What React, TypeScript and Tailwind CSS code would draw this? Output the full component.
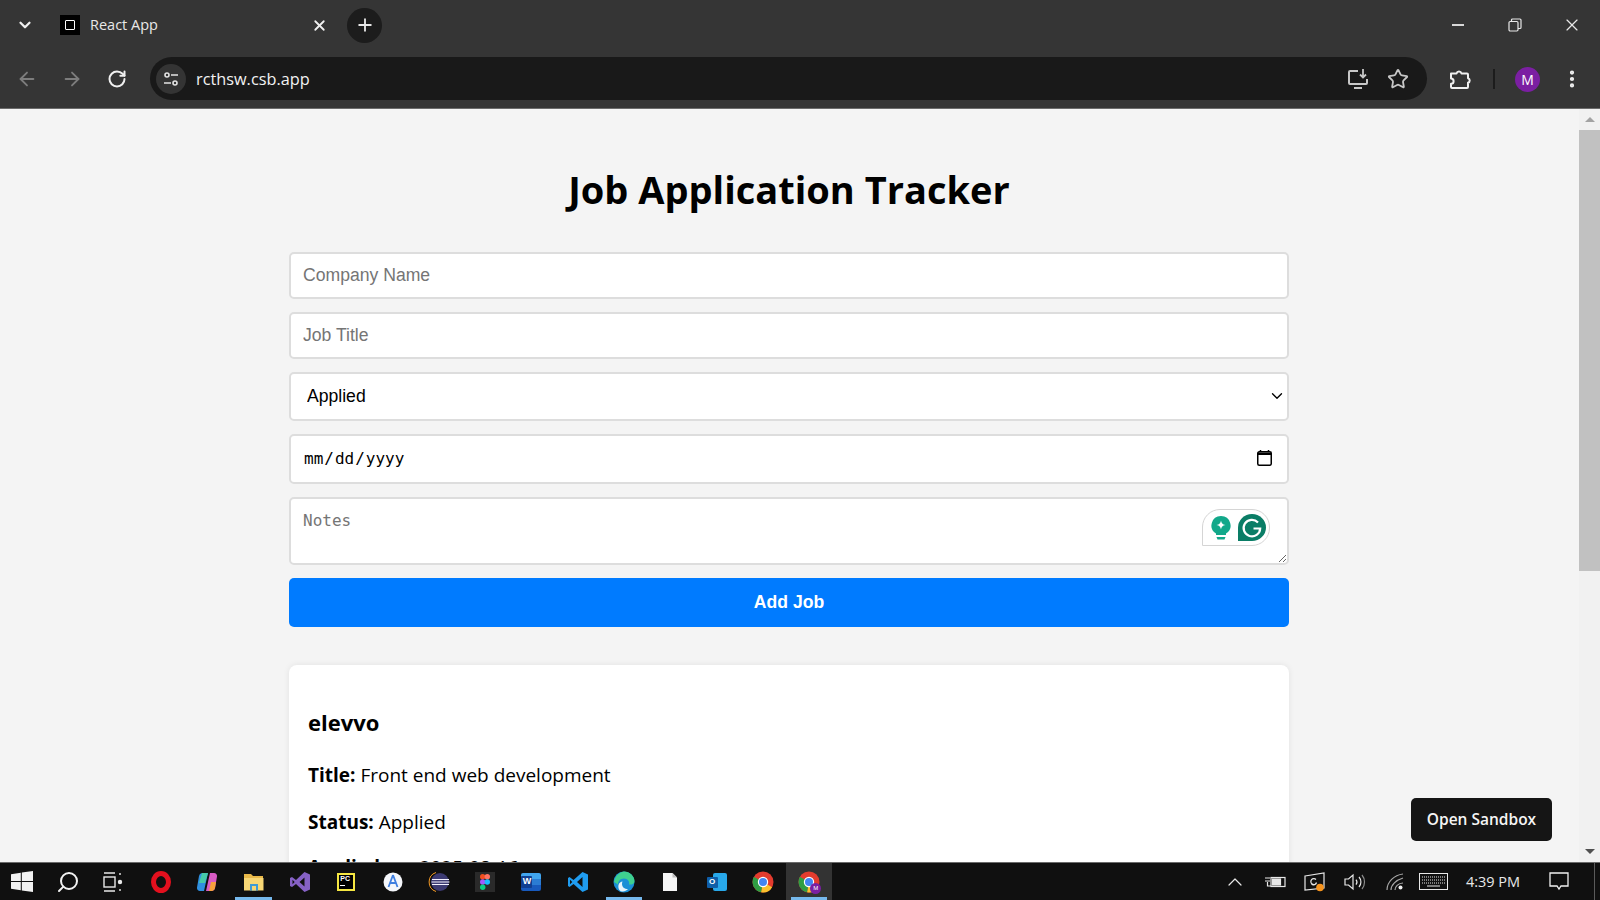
import { ArrowLeft, ArrowRight, ChevronDown, ChevronUp, EllipsisVertical, Plus, RotateCw, Search, Star, X } from "lucide-react";

// window controls and toolbar glyphs that lucide draws too differently
function RestoreIcon() {
  return (
    <svg width="14" height="14" viewBox="0 0 14 14" fill="none" stroke="#e8e8e8" strokeWidth="1.2">
      <rect x="1" y="3.5" width="9" height="9.5" rx="1.2" />
      <path d="M3.5 3.5V2a1 1 0 0 1 1-1H12a1 1 0 0 1 1 1v7.5a1 1 0 0 1-1 1h-2" />
    </svg>
  );
}

function SiteSettingsIcon() {
  return (
    <svg width="18" height="18" viewBox="0 0 18 18" fill="none" stroke="#e3e3e3" strokeWidth="1.6">
      <circle cx="5" cy="5" r="2" />
      <path d="M9 5h7M2 13h7" />
      <circle cx="13" cy="13" r="2" />
    </svg>
  );
}

function CastIcon() {
  return (
    <svg width="22" height="22" viewBox="0 0 22 22" fill="none" stroke="#c7c7c7" strokeWidth="2">
      <path d="M11 3H3a1 1 0 0 0-1 1v11a1 1 0 0 0 1 1h16a1 1 0 0 0 1-1v-4" />
      <path d="M7 20h8" />
      <path d="M16 1v8M13 6.5l3 3 3-3" strokeWidth="1.8" />
    </svg>
  );
}

function PuzzleIcon() {
  return (
    <svg width="22" height="22" viewBox="0 0 22 22" fill="none" stroke="#f0f0f0" strokeWidth="2" strokeLinejoin="round">
      <path d="M2 5.5h5.5a2.6 2.6 0 0 1 5 0H18a1 1 0 0 1 1 1v3.7a2.4 2.4 0 0 1 0 4.6V19a1 1 0 0 1-1 1H3a1 1 0 0 1-1-1v-3.2a2.6 2.6 0 0 0 0-5.2z" />
    </svg>
  );
}

function CalendarIcon() {
  return (
    <svg width="15" height="16" viewBox="0 0 15 16" fill="none">
      <path d="M3.500 0v2M11.500 0v2" stroke="#000" strokeWidth="1.500" />
      <rect x="0.750" y="1.750" width="13.500" height="13.500" rx="1.500" stroke="#000" strokeWidth="1.500" />
      <path d="M1 2.500h13v2.500H1z" fill="#000" />
    </svg>
  );
}

function GrammarlyBadge() {
  return (
    <div className="absolute right-[19px] top-[12px] flex h-[37px] w-[68px] items-center gap-[7px] rounded-[18px] rounded-bl-none border border-[#d5d5d5] bg-white pl-[8px]">
      <svg width="20" height="24" viewBox="0 0 20 24">
        <path d="M10 0a9.500 9.500 0 0 0-5 17.600V19h10v-1.400A9.500 9.500 0 0 0 10 0z" fill="#12a88a" />
        <path d="M5.500 21h9l-1 2.500h-7z" fill="#12a88a" />
        <path d="M10 4.500c.6 3 1.400 3.800 4.500 4.500-3.100.7-3.900 1.500-4.500 4.500-.6-3-1.400-3.800-4.500-4.500 3.100-.7 3.900-1.500 4.500-4.500z" fill="#fff" />
      </svg>
      <svg width="28" height="27" viewBox="0 0 28 27">
        <path d="M14 0a14 13.500 0 1 1 0 27H0V14A14 14 0 0 1 14 0z" fill="#0a7d66" />
        <path d="M20 8.500a8.300 8.300 0 1 0 2.200 6H15.500" fill="none" stroke="#fff" strokeWidth="2.200" />
      </svg>
    </div>
  );
}

function TaskIcon({ active, open, children }: { active?: boolean; open?: boolean; children: React.ReactNode }) {
  return (
    <div className={`relative flex h-full w-[46.3px] shrink-0 items-center justify-center ${active ? "bg-[#333333]" : ""}`}>
      {children}
      {(open || active) && <div className="absolute bottom-0 left-[5px] right-[5px] h-[3px] bg-[#76b9ed]" />}
    </div>
  );
}

const chromeWheel = (
  <>
    <circle cx="11" cy="11" r="10.500" fill="#e33b2e" />
    <path d="M11 11 20.100 16.200A10.500 10.500 0 0 1 9 21.300z" fill="#fbc02d" />
    <path d="M11 11 9 21.300A10.500 10.500 0 0 1 1.900 5.800z" fill="#2f9e44" />
    <circle cx="11" cy="11" r="5.200" fill="#fff" />
    <circle cx="11" cy="11" r="4" fill="#4285f4" />
  </>
);

function Taskbar() {
  return (
    <footer className="relative z-10 flex h-[38px] shrink-0 items-stretch border-t border-[#6a6a6a] bg-[#101010] text-white">
      <div className="-ml-px flex">
        <TaskIcon>
          <svg width="22" height="21" viewBox="0 0 22 21" fill="#f2f2f2">
            <path d="M0 3.200 9.800 1.700V10H0zM10.800 1.500 22 0v10H10.800zM0 11h9.800v8.300L0 17.800zM10.800 11H22v10l-11.200-1.600z" />
          </svg>
        </TaskIcon>
        <TaskIcon>
          <Search size={24} strokeWidth={2} className="-scale-x-100 text-[#f2f2f2]" />
        </TaskIcon>
        <TaskIcon>
          <svg width="20" height="20" viewBox="0 0 20 20" fill="none" stroke="#e8e8e8" strokeWidth="1.400" className="-ml-[3px]">
            <path d="M1 1h11M1 19h11" />
            <rect x="1" y="5" width="11" height="10" />
            <path d="M17 1v2M17 17v2" />
            <circle cx="17" cy="10" r="1.500" fill="#e8e8e8" />
          </svg>
        </TaskIcon>
        <TaskIcon>
          <svg width="20" height="22" viewBox="0 0 20 22">
            <ellipse cx="10" cy="11" rx="7.500" ry="8.500" fill="none" stroke="#e3101e" strokeWidth="5" />
          </svg>
        </TaskIcon>
        <TaskIcon>
          <svg width="22" height="22" viewBox="0 0 22 22">
            <path d="M6 2h6L8 20H4a3 3 0 0 1-3-3.500L3 5a3.500 3.500 0 0 1 3-3z" fill="#2f8fe0" />
            <path d="M6 2h6L9 12H3z" fill="#45c9a8" />
            <path d="M10 20h6a3.500 3.500 0 0 0 3-3l2-11.500A3 3 0 0 0 18 2h-4z" fill="#d95bc5" />
            <path d="M13 20h3a3.500 3.500 0 0 0 3-3l1-6h-5z" fill="#f6a13c" />
          </svg>
        </TaskIcon>
        <TaskIcon open>
          <svg width="20" height="18" viewBox="0 0 20 18">
            <path d="M0 1h7l2 2h10v14H0z" fill="#e9b949" />
            <path d="M0 5h19.500v12.500H0z" fill="#f8d775" />
            <path d="M6 11h8v6.500H6z" fill="#3f9bd6" />
            <path d="M8 13h4v4.500H8z" fill="#f8d775" />
          </svg>
        </TaskIcon>
        <TaskIcon>
          <svg width="22" height="22" viewBox="0 0 22 22">
            <path d="M15.500 1 21 3.500v15L15.500 21 7 13l-4 3-2-1V7l2-1 4 3z" fill="#8661c5" />
            <path d="M15.500 6.500 10.500 11l5 4.500zM3.500 8.800v4.400L5.700 11z" fill="#101010" />
          </svg>
        </TaskIcon>
        <TaskIcon>
          <div className="flex h-[18px] w-[18px] flex-col bg-[#f5e642] p-[2px]">
            <div className="flex flex-1 flex-col bg-black px-[1px] font-['Liberation_Sans',sans-serif] text-[7px] font-bold leading-[8px] text-white">
              PC
              <div className="mt-[2px] h-px w-[5px] bg-white" />
            </div>
          </div>
        </TaskIcon>
        <TaskIcon>
          <svg width="20" height="20" viewBox="0 0 20 20" fill="none">
            <circle cx="10" cy="10" r="9.500" fill="#f5f7fb" />
            <path d="M10 3 5.500 15M10 3l4.500 12M6.500 11h7" stroke="#3f7fe0" strokeWidth="1.800" />
          </svg>
        </TaskIcon>
        <TaskIcon>
          <svg width="22" height="22" viewBox="0 0 22 22">
            <circle cx="12" cy="11" r="9" fill="#3c3a72" />
            <path d="M4 8.500h17M3.500 11h18M4 13.500h17" stroke="#f3f1ff" strokeWidth="1.200" />
            <path d="M8 1.500a10 10 0 0 0 0 19" fill="none" stroke="#f59a23" strokeWidth="1" />
          </svg>
        </TaskIcon>
        <TaskIcon>
          <div className="flex h-[20px] w-[20px] items-center justify-center bg-[#2a2a2a]">
            <svg width="10" height="16" viewBox="0 0 10 16">
              <circle cx="2.700" cy="2.700" r="2.700" fill="#f24e1e" />
              <circle cx="7.300" cy="2.700" r="2.700" fill="#ff7262" />
              <circle cx="2.700" cy="8" r="2.700" fill="#a259ff" />
              <circle cx="7.300" cy="8" r="2.700" fill="#1abcfe" />
              <circle cx="2.700" cy="13.300" r="2.700" fill="#0acf83" />
            </svg>
          </div>
        </TaskIcon>
        <TaskIcon>
          <div className="relative flex h-[18px] w-[20px] flex-col overflow-hidden rounded-[2px]">
            <div className="h-1/3 bg-[#41a5ee]" />
            <div className="h-1/3 bg-[#2b7cd3]" />
            <div className="h-1/3 bg-[#185abd]" />
            <div className="absolute left-0 top-[3px] flex h-[12px] w-[11px] items-center justify-center rounded-[1px] bg-[#103f91] font-['Liberation_Sans',sans-serif] text-[9px] font-bold text-white">
              W
            </div>
          </div>
        </TaskIcon>
        <TaskIcon>
          <svg width="22" height="22" viewBox="0 0 22 22">
            <path d="M15.500 1 21 3.500v15L15.500 21 6.500 13l-4 3L1 15V7l1.500-1 4 3z" fill="#1f9cf0" />
            <path d="M15.500 6 10 11l5.500 5zM3 8.800v4.400L5.300 11z" fill="#101010" />
          </svg>
        </TaskIcon>
        <TaskIcon open>
          <svg width="22" height="22" viewBox="0 0 22 22">
            <circle cx="11" cy="11" r="10.500" fill="#1b8fd6" />
            <path d="M1 11C2 4 8 .5 11 .500c5.800 0 10.500 4.700 10.500 9.500 0 3-3 4-5.500 3.500 1-3-1.500-6-5-6-4 0-6 3-6 6" fill="#3fd08f" />
            <path d="M9 13c0 3 2.500 5 6 5-1.500 1.500-4 3-6 2.500C6 20 5 17 5.500 14c.5-2 2.500-3.500 4-3.500-.3 1-.5 1.700-.5 2.500z" fill="#fff" opacity="0.900" />
          </svg>
        </TaskIcon>
        <TaskIcon>
          <svg width="14" height="18" viewBox="0 0 14 18">
            <path d="M0 0h9.500L14 4.500V18H0z" fill="#f5f5f5" />
            <path d="M9.500 0v4.500H14z" fill="#bdbdbd" />
          </svg>
        </TaskIcon>
        <TaskIcon>
          <div className="relative h-[18px] w-[20px]">
            <div className="absolute right-0 top-0 h-full w-[14px] rounded-[2px] bg-[#28a8ea]" />
            <div className="absolute left-0 top-[4px] flex h-[11px] w-[11px] items-center justify-center rounded-[1px] bg-[#0f5ea8] font-['Liberation_Sans',sans-serif] text-[8px] font-bold text-white">
              O
            </div>
          </div>
        </TaskIcon>
        <TaskIcon>
          <svg width="22" height="22" viewBox="0 0 22 22">
            {chromeWheel}
          </svg>
        </TaskIcon>
        <TaskIcon active>
          <div className="relative h-[22px] w-[22px]">
            <svg width="22" height="22" viewBox="0 0 22 22">
              {chromeWheel}
            </svg>
            <div className="absolute -bottom-[1px] -right-[1px] flex h-[11px] w-[11px] items-center justify-center rounded-full bg-[#7b1fa2] font-['Liberation_Sans',sans-serif] text-[6px] text-white">
              M
            </div>
          </div>
        </TaskIcon>
      </div>

      <div className="ml-auto flex items-center">
        <div className="flex w-[40px] justify-center">
          <ChevronUp size={24} strokeWidth={1.200} className="text-[#e8e8e8]" />
        </div>
        <div className="flex w-[40px] justify-center">
          <svg width="22" height="14" viewBox="0 0 22 14" fill="none" stroke="#e8e8e8" strokeWidth="1.200">
            <path d="M1 3h5M1 6h5M3.500 7v4H7" />
            <rect x="7" y="2.500" width="14" height="9" />
            <rect x="8.500" y="4" width="8" height="6" fill="#e8e8e8" />
          </svg>
        </div>
        <div className="flex w-[40px] justify-center">
          <svg width="22" height="20" viewBox="0 0 22 20" fill="none" stroke="#e8e8e8" strokeWidth="1.200">
            <path d="M1 4 20 1v15L1 18z" />
            <path d="M12 7.500a3 3 0 1 0 .5 3.500M7.500 12a3 3 0 0 0 5-1.500" />
            <circle cx="16" cy="15.500" r="3.800" fill="#f7941d" stroke="none" />
          </svg>
        </div>
        <div className="flex w-[40px] justify-center">
          <svg width="22" height="20" viewBox="0 0 22 20" fill="none" stroke="#e8e8e8" strokeWidth="1.200">
            <path d="M1 7h3.500L9 3v14l-4.500-4H1z" />
            <path d="M12 7.500a4 4 0 0 1 0 5M15 5a7.500 7.500 0 0 1 0 10" />
            <path d="M18 3a11 11 0 0 1 0 14" stroke="#8a8a8a" />
          </svg>
        </div>
        <div className="flex w-[40px] justify-center">
          <svg width="18" height="18" viewBox="0 0 18 18" fill="none" stroke="#a8a8a8" strokeWidth="1.200">
            <path d="M1 17C1 9 8 2 17 1M5 17c0-5 5-10 12-12M9 17c0-3 3-7 8-7" />
            <circle cx="14.500" cy="14.500" r="2" fill="#f2f2f2" stroke="none" />
          </svg>
        </div>
        <div className="flex w-[36px] justify-center">
          <svg width="29" height="17" viewBox="0 0 29 17" fill="none" stroke="#e8e8e8">
            <rect x="0.500" y="0.500" width="28" height="16" />
            <path d="M3 4h23M3 7h23M3 10h23" strokeDasharray="1 1" />
            <path d="M8 13h13" />
          </svg>
        </div>
        <span className="w-[84px] text-center font-['Open_Sans',sans-serif] text-[14.5px] text-[#e8e8e8]">4:39 PM</span>
        <div className="flex w-[48px] justify-center">
          <svg width="20" height="19" viewBox="0 0 20 19" fill="none" stroke="#f2f2f2" strokeWidth="1.300">
            <path d="M1 1h18v13h-7l-2 3-2-3H1z" />
          </svg>
        </div>
        <div className="h-full w-[17px] pl-[11px]">
          <div className="h-full border-l border-[#5a5a5a]" />
        </div>
      </div>
    </footer>
  );
}

function BrowserChrome() {
  return (
    <header className="shrink-0 bg-[#353535] text-[#e8e8e8]">
      <div className="flex h-[57px] items-center pb-[7px]">
        <div className="flex w-[50px] justify-center">
          <ChevronDown size={18} strokeWidth={3} className="text-[#f0f0f0]" />
        </div>
        <div className="ml-[10px] flex h-[20px] w-[20px] items-center justify-center bg-black">
          <div className="h-[10px] w-[10px] rounded-[1px] border border-white" />
        </div>
        <span className="ml-[10px] w-[221px] font-['Open_Sans',sans-serif] text-[14.5px] leading-none">React App</span>
        <X size={17} strokeWidth={2.500} className="text-[#f0f0f0]" />
        <div className="ml-[19px] flex h-[35px] w-[35px] items-center justify-center rounded-full bg-[#1c1c1c]">
          <Plus size={20} strokeWidth={2.200} />
        </div>
        <div className="ml-auto flex items-center">
          <div className="flex w-[57px] justify-center">
            <div className="h-[1.500px] w-[12px] bg-[#d8d8d8]" />
          </div>
          <div className="flex w-[57px] justify-center">
            <RestoreIcon />
          </div>
          <div className="flex w-[57px] justify-center">
            <X size={20} strokeWidth={1.400} />
          </div>
        </div>
      </div>
      <div className="flex h-[52px] items-start border-b border-[#6b6b6b] pl-[16px]">
        <div className="flex h-[44px] items-center">
          <ArrowLeft size={22} strokeWidth={2} className="text-[#7d7d7d]" />
          <ArrowRight size={22} strokeWidth={2} className="ml-[23px] text-[#7d7d7d]" />
          <RotateCw size={20} strokeWidth={2.400} className="ml-[24px] text-[#f0f0f0]" />
        </div>
        <div className="ml-[23px] flex h-[43px] w-[1277px] items-center rounded-full bg-[#191919] pl-[6px] pr-[18px]">
          <div className="flex h-[30px] w-[30px] items-center justify-center rounded-full bg-[#343434]">
            <SiteSettingsIcon />
          </div>
          <span className="ml-[10px] pt-px font-['Open_Sans',sans-serif] text-[16.3px] text-[#f2f2f2]">rcthsw.csb.app</span>
          <div className="ml-auto flex items-center gap-[18px]">
            <CastIcon />
            <Star size={22} strokeWidth={2} className="text-[#c7c7c7]" />
          </div>
        </div>
        <div className="flex h-[44px] items-center">
          <div className="ml-[22px]">
            <PuzzleIcon />
          </div>
          <div className="ml-[22px] h-[20px] w-[2px] bg-[#1c1c1c]" />
          <div className="ml-[20px] flex h-[25px] w-[25px] items-center justify-center rounded-full bg-[#7b1fa2] font-['Open_Sans',sans-serif] text-[14px] text-white">
            M
          </div>
          <EllipsisVertical size={22} strokeWidth={2.600} className="ml-[21px] text-[#f0f0f0]" />
        </div>
      </div>
    </header>
  );
}

function Scrollbar() {
  return (
    <div className="flex w-[21px] shrink-0 flex-col items-center bg-[#f1f1f1]">
      <div className="flex h-[21px] w-full items-center justify-center">
        <div className="h-0 w-0 border-x-[5px] border-b-[5px] border-x-transparent border-b-[#a3a3a3]" />
      </div>
      <div className="h-[441px] w-full bg-[#c1c1c1]" />
      <div className="flex-1" />
      <div className="flex h-[21px] w-full items-center justify-center">
        <div className="h-0 w-0 border-x-[5px] border-t-[5px] border-x-transparent border-t-[#505050]" />
      </div>
    </div>
  );
}

export default function App() {
  const fieldClass =
    "w-full rounded-[5px] border-2 border-[#dddddd] bg-white px-[12px] outline-none placeholder:text-[#757575]";

  return (
    <div className="flex h-screen w-[1600px] flex-col overflow-hidden bg-[#f4f4f4]">
      <BrowserChrome />

      <div className="relative flex min-h-0 flex-1">
        <main className="min-w-0 flex-1 overflow-hidden pr-px font-['Open_Sans',sans-serif] text-black">
          <div className="mx-auto w-[1000px]">
            <h1 className="mt-[53px] text-center text-[38px] font-bold leading-[54px]">Job Application Tracker</h1>

            <form className="mt-[36px] flex flex-col gap-[13px]">
              <input
                placeholder="Company Name"
                className={`${fieldClass} h-[47px] font-['Liberation_Sans',sans-serif] text-[17.6px]`}
              />
              <input
                placeholder="Job Title"
                className={`${fieldClass} h-[47px] font-['Liberation_Sans',sans-serif] text-[17.6px]`}
              />
              <div className="relative">
                <select
                  defaultValue="Applied"
                  className={`${fieldClass} h-[49px] appearance-none !pl-[16px] font-['Liberation_Sans',sans-serif] text-[17.6px]`}
                >
                  <option>Applied</option>
                  <option>Interviewing</option>
                  <option>Offer</option>
                  <option>Rejected</option>
                </select>
                <ChevronDown size={18} strokeWidth={1.800} className="pointer-events-none absolute right-[3px] top-[15px]" />
              </div>
              <div className="relative">
                <input
                  type="date"
                  className={`${fieldClass} h-[50px] font-['DejaVu_Sans_Mono',monospace] text-[16px] [&::-webkit-calendar-picker-indicator]:opacity-0`}
                />
                <div className="pointer-events-none absolute right-[17px] top-[16px]">
                  <CalendarIcon />
                </div>
              </div>
              <div className="relative flex">
                <textarea
                  placeholder="Notes"
                  className={`${fieldClass} h-[68px] py-[12px] font-['DejaVu_Sans_Mono',monospace] text-[16px] leading-[20px]`}
                />
                <GrammarlyBadge />
              </div>
              <button
                type="button"
                className="h-[49px] w-full rounded-[5px] bg-[#007bff] font-['Liberation_Sans',sans-serif] text-[17.6px] font-bold text-white"
              >
                Add Job
              </button>
            </form>

            <section className="mt-[38px] rounded-[8px] bg-white px-[19px] pb-[20px] pt-[39px] shadow-[0_0_6px_rgba(0,0,0,0.08)]">
              <h3 className="text-[22px] font-bold leading-[36px]">elevvo</h3>
              <p className="mt-[20px] text-[19px] leading-[30px]">
                <strong className="font-bold">Title:</strong> Front end web development
              </p>
              <p className="mt-[17px] text-[19px] leading-[30px]">
                <strong className="font-bold">Status:</strong> Applied
              </p>
              <p className="mt-[15px] text-[19px] leading-[30px]">
                <strong className="font-bold">Applied on:</strong> 2025-08-16
              </p>
            </section>
          </div>
        </main>

        <Scrollbar />

        <button
          type="button"
          className="absolute bottom-[21px] right-[48px] h-[43px] w-[141px] rounded-[5px] bg-[#151515] font-['Open_Sans',sans-serif] text-[15.5px] font-semibold text-[#f5f5f5]"
        >
          Open Sandbox
        </button>
      </div>

      <Taskbar />
    </div>
  );
}
